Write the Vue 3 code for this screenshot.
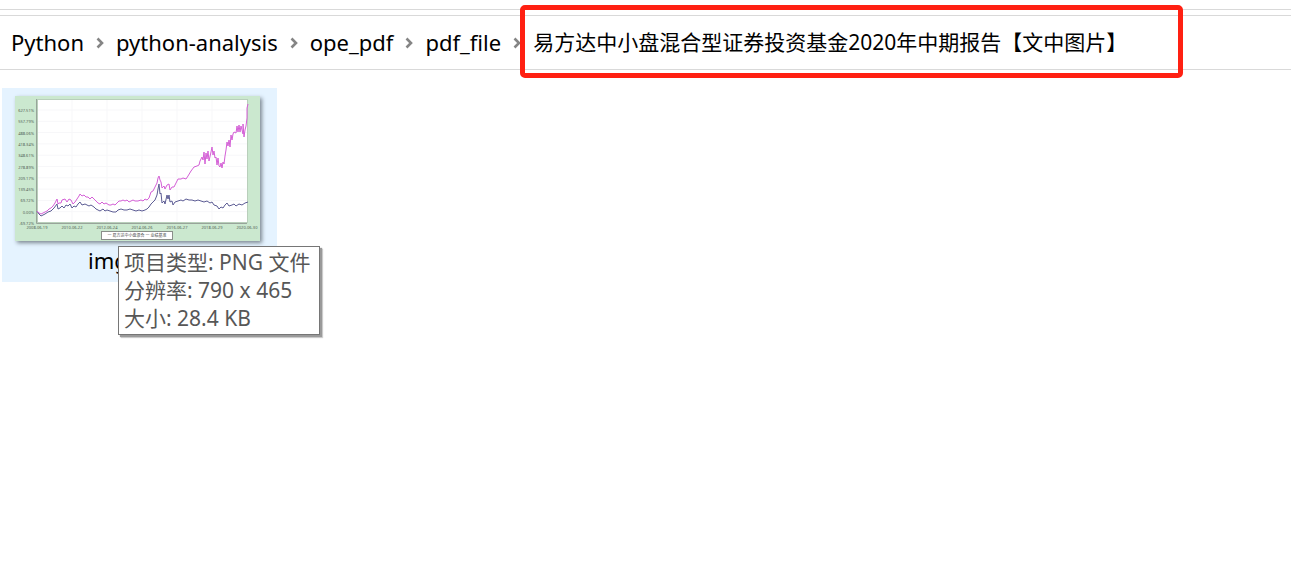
<script setup>
const folders = ['Python', 'python-analysis', 'ope_pdf', 'pdf_file']
const current = '易方达中小盘混合型证券投资基金2020年中期报告【文中图片】'

const levels = ['627.51%', '557.79%', '488.06%', '418.34%', '348.61%', '278.89%', '209.17%', '139.45%', '69.72%', '0.00%', '-69.72%']
const dates = ['2008-06-19', '2010-06-22', '2012-06-24', '2014-06-26', '2016-06-27', '2018-06-29', '2020-06-30']

const fund = '22,115 24,117 26,118 28,117 30,116 32,115 34,113 36,112 38,110 40,107 42,103 43,108 44,107 46,107 47,104 50,103 52,106 54,103 56,104 58,108 60,106 62,103 64,100 65,98 67,100 69,99 71,101 73,101 75,103 77,101 79,103 81,105 83,107 85,108 87,106 89,108 91,107 94,109 96,109 98,108 100,109 102,107 104,105 106,105 108,104 110,105 112,104 114,106 116,105 118,104 120,105 123,105 126,104 128,105 130,103 132,104 134,102 136,96 138,95 140,91 142,87 143,82 144,80 145,84 146,86 147,92 149,90 150,93 152,89 154,88 155,94 157,91 159,91 161,87 163,83 166,83 168,82 171,83 173,80 176,75 179,71 182,70 184,69 185,65 187,61 188,64 189,56 190,68 191,57 192,63 193,55 194,65 196,56 197,51 198,59 199,55 200,62 201,61 202,69 203,62 204,70 205,71 206,67 207,72 208,66 209,68 210,60 211,54 212,46 213,50 214,44 215,51 216,39 217,44 218,38 219,36 221,37 222,30 223,36 224,29 225,36 226,30 228,38 228,28 229,41 230,34 231,30 232,22 232,12 233,8'
const benchmark = '22,115 24,118 26,120 28,119 30,118 33,116 36,115 39,112 42,108 43,113 45,112 47,110 49,112 51,109 53,110 55,108 57,112 59,110 61,111 63,108 65,106 67,109 70,108 72,109 74,110 76,109 79,111 81,113 83,114 85,115 88,113 90,115 92,114 95,115 98,116 101,116 103,114 106,113 109,114 112,114 115,113 118,114 121,115 124,114 127,115 130,114 132,113 134,111 136,108 138,106 140,104 142,99 143,93 144,88 145,98 146,97 147,107 149,105 150,108 152,99 153,103 154,99 155,106 157,105 158,109 160,106 163,105 166,104 168,105 171,103 174,104 177,104 180,105 183,104 186,105 189,106 192,105 195,107 197,106 199,109 202,110 204,113 206,111 208,112 210,109 212,107 214,110 217,109 219,108 221,110 224,108 227,109 230,107 233,106'
</script>

<template>
  <main class="explorer">
    <nav class="address" aria-label="路径">
      <template v-for="folder in folders" :key="folder">
        <a class="crumb" href="#">{{ folder }}</a>
        <svg class="chevron" viewBox="0 0 8 12" aria-hidden="true">
          <path d="M1.5 1.5 L6 6 L1.5 10.5" />
        </svg>
      </template>
      <a class="crumb current" href="#">{{ current }}</a>
    </nav>

    <section class="files">
      <figure class="file">
        <svg class="thumb" viewBox="0 0 245 145" role="img" aria-label="img">
          <rect width="245" height="145" fill="#cbe8cf" />
          <rect x="22" y="3" width="211" height="124" fill="#b9cfbb" />
          <rect x="23" y="4" width="209" height="122" fill="#fff" />
          <path d="M21.500 3V127.500H232" fill="none" stroke="#98a49a" />
          <g class="grid">
            <path v-for="(level, i) in levels.slice(0, 10)" :key="level" :d="`M23 ${14 + i * 11.3}H232`" />
            <path v-for="i in 5" :key="i" :d="`M${22 + i * 35} 4V126`" />
          </g>
          <g class="levels">
            <text v-for="(level, i) in levels" :key="level" x="19" :y="16 + i * 11.3">{{ level }}</text>
          </g>
          <g class="dates">
            <text v-for="(date, i) in dates" :key="date" :x="22 + i * 35" y="133">{{ date }}</text>
          </g>
          <polyline :points="benchmark" class="series benchmark" />
          <polyline :points="fund" class="series fund" />
          <rect x="86.500" y="135.500" width="71" height="8" fill="#fff" stroke="#8a8f8a" />
          <text class="legend" x="122" y="141">一 易方达中小盘混合 一 业绩基准</text>
        </svg>
        <figcaption class="name">img</figcaption>
        <div class="tooltip" role="tooltip">
          <div>项目类型: PNG 文件</div>
          <div>分辨率: 790 x 465</div>
          <div>大小: 28.4 KB</div>
        </div>
      </figure>
    </section>
  </main>
</template>

<style>
body {
  margin: 0;
  background: #fff;
}
</style>

<style scoped>
.explorer {
  box-sizing: border-box;
  min-height: 100vh;
  padding-top: 9px;
  color: #000;
  font-family: "Noto Sans", "Noto Sans CJK SC", sans-serif;
  font-size: 21px;
  line-height: 28px;
}

.explorer::before {
  content: "";
  display: block;
  height: 1px;
  background: #d9d9d9;
}

.address {
  display: flex;
  align-items: center;
  height: 53px;
  margin-top: 5px;
  padding-left: 11px;
  border-top: 1px solid #d9d9d9;
  border-bottom: 1px solid #d9d9d9;
  white-space: nowrap;
}

.crumb {
  padding-bottom: 2px;
  color: inherit;
  font-size: 22px;
  text-decoration: none;
}

.chevron {
  flex: none;
  width: 8px;
  height: 12px;
  margin: 0 12px;
}

.chevron path {
  fill: none;
  stroke: #858585;
  stroke-width: 2.6;
}

.current {
  position: relative;
  font-size: 21px;
}

.current::after {
  content: "";
  position: absolute;
  inset: -23px -56px -20px -13px;
  border: 5px solid #ff2012;
  border-radius: 5px;
}

.files {
  display: flex;
  padding: 18px 2px;
}

.file {
  position: relative;
  box-sizing: border-box;
  width: 275px;
  margin: 0;
  padding: 8px 13px;
  background: #e5f3ff;
}

.thumb {
  display: block;
  width: 245px;
  height: 145px;
  box-shadow: 2px 2px 4px #7d8992;
}

.grid path {
  fill: none;
  stroke: #f7f7f9;
}

.levels,
.dates {
  fill: #526056;
  font-size: 4px;
}

.levels {
  text-anchor: end;
}

.dates,
.legend {
  text-anchor: middle;
}

.legend {
  fill: #444;
  font-size: 4px;
}

.series {
  fill: none;
  stroke-width: 1;
}

.fund {
  stroke: #d45fd6;
}

.benchmark {
  stroke: #5c5c94;
}

.name {
  margin-top: 5px;
  padding-left: 73px;
  font-size: 22px;
}

.tooltip {
  position: absolute;
  top: 158px;
  left: 116px;
  padding: 1px 8px 2px 5px;
  border: 1px solid #767676;
  background: #fff;
  color: #575757;
  white-space: nowrap;
  box-shadow: 2px 2px 1px #9a9a9a, 3px 3px 1px #d5d5d5;
}
</style>
